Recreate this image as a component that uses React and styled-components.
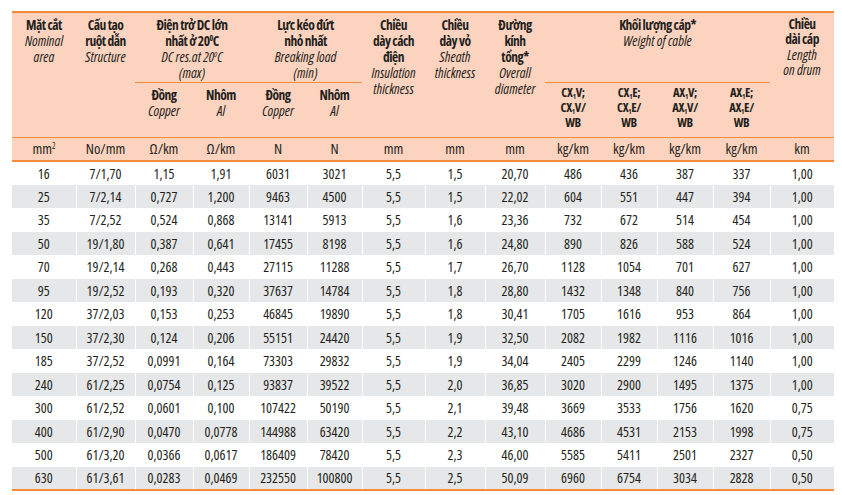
import React from "react";
import styled, { createGlobalStyle } from "styled-components";

const Global = createGlobalStyle`
  html, body { margin: 0; padding: 0; background: #ffffff; }
  body {
    font-family: "Open Sans", "Noto Sans", "DejaVu Sans Condensed", sans-serif;
    font-stretch: 75%;
    color: #231f20;
  }
`;

const PEACH = "#fcd3bf";
const ORANGE = "#f68b3c";
const GRAY = "#e6e7e8";

const Page = styled.div`
  padding: 11px 8px 0 12px;
`;

const Table = styled.table`
  width: 822px;
  table-layout: fixed;
  border-collapse: collapse;
  font-size: 14px;
  font-stretch: 75%;
`;

const HeadRow = styled.tr`
  background: ${PEACH};
  height: ${(p) => p.$h}px;
`;

const Th = styled.th`
  vertical-align: top;
  text-align: center;
  padding: ${(p) => (p.$pt !== undefined ? p.$pt : 4)}px 0 0;
  line-height: ${(p) => (p.$lh ? p.$lh : 16)}px;
  font-weight: normal;
  border-top: ${(p) => (p.$top ? `2px solid ${ORANGE}` : "none")};
  border-bottom: ${(p) => (p.$line ? `1px solid ${ORANGE}` : "none")};
`;

const Vi = styled.span`
  display: block;
  font-weight: bold;
  font-size: 13.5px;
  letter-spacing: -0.5px;
`;

const En = styled.span`
  display: block;
  font-style: italic;
  font-size: 14px;
  font-stretch: 82%;
`;

const Code = styled.span`
  display: block;
  font-weight: bold;
  font-size: 12.5px;
  line-height: 15px;
  letter-spacing: -0.3px;
`;

const Sub = styled.sub`
  font-size: 7px;
  vertical-align: -2px;
  line-height: 0;
`;

const Sup = styled.sup`
  font-size: 8px;
  vertical-align: 5px;
  line-height: 0;
`;

const UnitRow = styled.tr`
  background: ${PEACH};
  height: 24px;
  border-top: 1px solid ${ORANGE};
  border-bottom: 2px solid ${ORANGE};
`;

const UnitCell = styled.td`
  text-align: center;
  vertical-align: middle;
  padding: 0;
  font-size: 14.5px;
  font-weight: 500;
`;

const Row = styled.tr`
  background: ${(p) => (p.$alt ? GRAY : "#ffffff")};
  height: 23.5px;
  border-bottom: ${(p) => (p.$last ? `2px solid ${ORANGE}` : "none")};
`;

const Td = styled.td`
  text-align: center;
  vertical-align: middle;
  padding: 0;
  font-size: 14px;
  font-weight: 500;
  border-left: 1px solid #ffffff;
  &:first-child { border-left: none; }
`;

const widths = [64, 59, 58, 56, 58, 55, 63, 60, 60, 56, 56, 56, 57, 64];

const units = [
  <>mm<Sup>2</Sup></>,
  "No/mm",
  "Ω/km",
  "Ω/km",
  "N",
  "N",
  "mm",
  "mm",
  "mm",
  "kg/km",
  "kg/km",
  "kg/km",
  "kg/km",
  "km",
];

const rows = [
  ["16", "7/1,70", "1,15", "1,91", "6031", "3021", "5,5", "1,5", "20,70", "486", "436", "387", "337", "1,00"],
  ["25", "7/2,14", "0,727", "1,200", "9463", "4500", "5,5", "1,5", "22,02", "604", "551", "447", "394", "1,00"],
  ["35", "7/2,52", "0,524", "0,868", "13141", "5913", "5,5", "1,6", "23,36", "732", "672", "514", "454", "1,00"],
  ["50", "19/1,80", "0,387", "0,641", "17455", "8198", "5,5", "1,6", "24,80", "890", "826", "588", "524", "1,00"],
  ["70", "19/2,14", "0,268", "0,443", "27115", "11288", "5,5", "1,7", "26,70", "1128", "1054", "701", "627", "1,00"],
  ["95", "19/2,52", "0,193", "0,320", "37637", "14784", "5,5", "1,8", "28,80", "1432", "1348", "840", "756", "1,00"],
  ["120", "37/2,03", "0,153", "0,253", "46845", "19890", "5,5", "1,8", "30,41", "1705", "1616", "953", "864", "1,00"],
  ["150", "37/2,30", "0,124", "0,206", "55151", "24420", "5,5", "1,9", "32,50", "2082", "1982", "1116", "1016", "1,00"],
  ["185", "37/2,52", "0,0991", "0,164", "73303", "29832", "5,5", "1,9", "34,04", "2405", "2299", "1246", "1140", "1,00"],
  ["240", "61/2,25", "0,0754", "0,125", "93837", "39522", "5,5", "2,0", "36,85", "3020", "2900", "1495", "1375", "1,00"],
  ["300", "61/2,52", "0,0601", "0,100", "107422", "50190", "5,5", "2,1", "39,48", "3669", "3533", "1756", "1620", "0,75"],
  ["400", "61/2,90", "0,0470", "0,0778", "144988", "63420", "5,5", "2,2", "43,10", "4686", "4531", "2153", "1998", "0,75"],
  ["500", "61/3,20", "0,0366", "0,0617", "186409", "78420", "5,5", "2,3", "46,00", "5585", "5411", "2501", "2327", "0,50"],
  ["630", "61/3,61", "0,0283", "0,0469", "232550", "100800", "5,5", "2,5", "50,09", "6960", "6754", "3034", "2828", "0,50"],
];

const codes = [
  ["CX", "V"],
  ["CX", "E"],
  ["AX", "V"],
  ["AX", "E"],
];

export default function App() {
  return (
    <Page>
      <Global />
      <Table>
        <colgroup>
          {widths.map((w, i) => (
            <col key={i} style={{ width: w }} />
          ))}
        </colgroup>
        <thead>
          <HeadRow $h={70}>
            <Th rowSpan={2} $top>
              <Vi>Mặt cắt</Vi>
              <En>Nominal</En>
              <En>area</En>
            </Th>
            <Th rowSpan={2} $top>
              <Vi>Cấu tạo</Vi>
              <Vi>ruột dẫn</Vi>
              <En>Structure</En>
            </Th>
            <Th colSpan={2} $top $line>
              <Vi>Điện trở DC lớn</Vi>
              <Vi>
                nhất ở 20<Sup>0</Sup>C
              </Vi>
              <En>
                DC res.at 20<Sup>0</Sup>C
              </En>
              <En>(max)</En>
            </Th>
            <Th colSpan={2} $top $line>
              <Vi>Lực kéo đứt</Vi>
              <Vi>nhỏ nhất</Vi>
              <En>Breaking load</En>
              <En>(min)</En>
            </Th>
            <Th rowSpan={2} $top>
              <Vi>Chiều</Vi>
              <Vi>dày cách</Vi>
              <Vi>điện</Vi>
              <En>Insulation</En>
              <En>thickness</En>
            </Th>
            <Th rowSpan={2} $top>
              <Vi>Chiều</Vi>
              <Vi>dày vỏ</Vi>
              <En>Sheath</En>
              <En>thickness</En>
            </Th>
            <Th rowSpan={2} $top>
              <Vi>Đường</Vi>
              <Vi>kính</Vi>
              <Vi>tổng*</Vi>
              <En>Overall</En>
              <En>diameter</En>
            </Th>
            <Th colSpan={4} $top $line>
              <Vi>Khối lượng cáp*</Vi>
              <En>Weight of cable</En>
            </Th>
            <Th rowSpan={2} $top $lh={15}>
              <Vi>Chiều</Vi>
              <Vi>dài cáp</Vi>
              <En>Length</En>
              <En>on drum</En>
            </Th>
          </HeadRow>
          <HeadRow $h={55}>
            <Th>
              <Vi>Đồng</Vi>
              <En>Copper</En>
            </Th>
            <Th>
              <Vi>Nhôm</Vi>
              <En>Al</En>
            </Th>
            <Th>
              <Vi>Đồng</Vi>
              <En>Copper</En>
            </Th>
            <Th>
              <Vi>Nhôm</Vi>
              <En>Al</En>
            </Th>
            {codes.map(([a, b]) => (
              <Th key={a + b} $lh={15} $pt={2}>
                <Code>
                  {a}
                  <Sub>1</Sub>
                  {b};
                </Code>
                <Code>
                  {a}
                  <Sub>1</Sub>
                  {b}/
                </Code>
                <Code>WB</Code>
              </Th>
            ))}
          </HeadRow>
          <UnitRow>
            {units.map((u, i) => (
              <UnitCell key={i}>{u}</UnitCell>
            ))}
          </UnitRow>
        </thead>
        <tbody>
          {rows.map((r, i) => (
            <Row key={r[0]} $alt={i % 2 === 1} $last={i === rows.length - 1}>
              {r.map((c, j) => (
                <Td key={j}>{c}</Td>
              ))}
            </Row>
          ))}
        </tbody>
      </Table>
    </Page>
  );
}
